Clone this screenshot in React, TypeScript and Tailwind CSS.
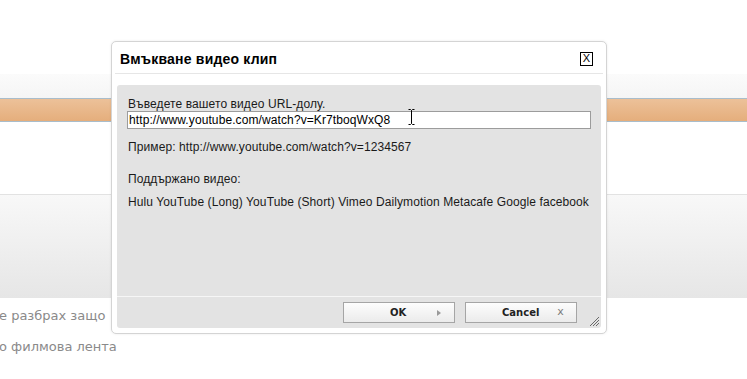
import React from "react";

export default function App() {
  return (
    <div className="relative w-[747px] h-[379px] overflow-hidden bg-white">
      {/* background page */}
      <div className="flex flex-col">
        <div className="h-[74px] bg-white" />
        <div className="h-[24px] bg-gradient-to-b from-[#fbfbfb] to-[#f5f5f5]" />
        <div className="h-[24px] border-y border-[#a9bdcb] bg-gradient-to-b from-[#ecc199] to-[#e5ae7c]" />
        <div className="h-[73px] bg-white border-b border-[#e2e2e2]" />
        <div className="h-[103px] bg-gradient-to-b from-[#f8f8f8] to-[#e6e6e6]" />
        <div className="pt-[9px] font-['DejaVu_Sans',sans-serif] text-[13px] leading-[18px] text-[#8a8a8a] flex flex-col gap-[13px]">
          <div className="-ml-[1px]">е разбрах защо</div>
          <div className="-ml-[1px]">о филмова лента</div>
        </div>
      </div>

      {/* dialog */}
      <div className="absolute left-[111px] top-[41px] w-[496px] h-[293px] bg-white border border-[#d4d4d4] rounded-[5px] shadow-[0_0_3px_rgba(0,0,0,0.08)] flex flex-col font-['Liberation_Sans',Arial,sans-serif]">
        <div className="h-[31px] flex items-center justify-between pl-[8px] pr-[13px]">
          <div className="text-[14px] font-bold text-black leading-none pt-[2px] tracking-[0.2px]">Вмъкване видео клип</div>
          <div className="w-[13px] h-[14px] border border-black flex items-center justify-center text-[11px] leading-none text-black mt-[2px]">X</div>
        </div>
        <div className="mx-[3px] h-px bg-[#e6e6e6]" />
        <div className="flex-1 mx-[5px] mt-[11px] mb-[5px] bg-[#e3e3e3] rounded-[3px] flex flex-col">
          <div className="flex-1 pl-[10px] pr-[10px] pt-[12px] text-[12px] leading-[14px] text-[#1a1a1a] tracking-[0.1px]">
            <div className="pl-[1px]">Въведете вашето видео URL-долу.</div>
            <div className="relative h-[18px] border border-[#9c9c9c] bg-white flex items-center pl-[1px] text-black">
              http://www.youtube.com/watch?v=Kr7tboqWxQ8
              <svg className="absolute left-[280px] top-[-3px]" width="7" height="16" viewBox="0 0 7 16">
                <path d="M0.5 0.5 H2.5 L3.5 1.5 L4.5 0.5 H6.5 M3.5 1.5 V14.5 M0.5 15.5 H2.5 L3.5 14.5 L4.5 15.5 H6.5" stroke="#000" strokeWidth="1" fill="none" />
              </svg>
            </div>
            <div className="mt-[11px] pl-[1px]">Пример: http://www.youtube.com/watch?v=1234567</div>
            <div className="mt-[18px] pl-[1px]">Поддържано видео:</div>
            <div className="mt-[9px] pl-[1px] whitespace-nowrap">Hulu YouTube (Long) YouTube (Short) Vimeo Dailymotion Metacafe Google facebook</div>
          </div>
          <div className="h-px bg-[#f6f6f6]" />
          <div className="relative h-[31px] flex items-start justify-end gap-[10px] pr-[24px] pt-[5px] font-['DejaVu_Sans',sans-serif]">
            <div className="relative w-[112px] h-[21px] border border-[#a5a5a5] bg-gradient-to-b from-[#fdfdfd] to-[#ebebeb] flex items-center justify-center text-[10px] font-bold text-[#222]">
              <span className="-ml-[2px]">OK</span>
              <svg className="absolute left-[93px] top-[7px]" width="4" height="6" viewBox="0 0 4 6">
                <path d="M0 0 L4 3 L0 6 Z" fill="#9a9a9a" />
              </svg>
            </div>
            <div className="relative w-[112px] h-[21px] border border-[#a5a5a5] bg-gradient-to-b from-[#fdfdfd] to-[#ebebeb] flex items-center text-[10px] font-bold text-[#222]">
              <span className="ml-[36px]">Cancel</span>
              <span className="ml-[18px] font-normal text-[#7d7d7d] text-[11px]">x</span>
            </div>
            <svg className="absolute right-[1px] bottom-[1px]" width="11" height="11" viewBox="0 0 11 11">
              <path d="M1 10 L10 1 M4 10 L10 4 M7 10 L10 7" stroke="#6a6a6a" strokeWidth="1" />
            </svg>
          </div>
        </div>
      </div>
    </div>
  );
}
